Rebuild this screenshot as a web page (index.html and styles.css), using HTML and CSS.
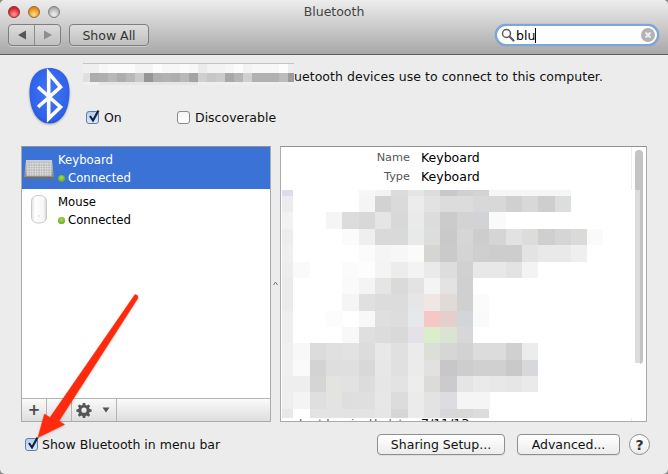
FILE: index.html
```html
<!DOCTYPE html>
<html lang="en">
<head>
<meta charset="utf-8">
<title>Bluetooth</title>
<link rel="stylesheet" href="styles.css">
</head>
<body>
<div class="window">
  <header class="titlebar">
    <div class="title-row">
      <div class="lights"><span class="light red"></span><span class="light amber"></span><span class="light grey"></span></div>
      <div class="title">Bluetooth</div>
    </div>
    <div class="tool-row">
      <div class="segmented">
        <button class="seg"><svg width="10" height="10" viewBox="0 0 10 10"><path class="tri-dark" d="M1 5 9 .5v9z"/></svg></button>
        <button class="seg"><svg width="10" height="10" viewBox="0 0 10 10"><path class="tri-light" d="M9 5 1 .5v9z"/></svg></button>
      </div>
      <button class="tool-btn">Show All</button>
      <div class="search">
        <svg class="glass" width="14" height="14" viewBox="0 0 14 14"><circle cx="5.5" cy="5.5" r="4" class="glass-ring"/><path class="glass-handle" d="m8.5 8.5 4 4"/></svg>
        <span class="search-text">blu</span><span class="caret"></span>
        <svg class="clear" width="14" height="14" viewBox="0 0 14 14"><circle cx="7" cy="7" r="7" class="clear-bg"/><path class="clear-x" d="m4.5 4.5 5 5m0-5-5 5"/></svg>
      </div>
    </div>
  </header>

  <main class="content">
    <section class="top">
      <svg class="bt-icon" width="41" height="57" viewBox="0 0 41 57">
        <defs>
          <radialGradient id="bt" cx="50%" cy="45%" r="60%"><stop offset="0" stop-color="#4478f2"/><stop offset=".8" stop-color="#2f62ea"/><stop offset="1" stop-color="#1c48cc"/></radialGradient>
        </defs>
        <path fill="url(#bt)" d="M20.5 0C33 0 40.500 9 40.500 24 40.500 43 32 55.500 20.500 55.500 9 55.500 .5 43 .5 24 .5 9 8 0 20.500 0Z"/>
        <path class="rune" d="M9 19 31.500 39 19.700 50.500V5L31.500 19 9 39"/>
      </svg>
      <div class="top-right">
        <div class="desc">
          <svg class="desc-blur" width="211" height="22" viewBox="0 0 211 22" shape-rendering="crispEdges">
            <rect width="211" height="1" fill="#c4c4c4"/>
            <rect y="1" width="211" height="9" fill="#f7f7f7"/>
            <rect y="1" width="16" height="9" fill="#efefef"/>
            <rect x="25" y="1" width="27" height="9" fill="#fbfbfb"/>
            <rect x="52" y="1" width="18" height="9" fill="#f4f4f4"/>
            <rect x="70" y="1" width="9" height="9" fill="#fcfcfc"/>
            <rect x="97" y="1" width="9" height="9" fill="#fbfbfb"/>
            <rect x="115" y="1" width="9" height="9" fill="#ebebeb"/>
            <rect x="124" y="1" width="18" height="9" fill="#f3f3f3"/>
            <rect x="151" y="1" width="9" height="9" fill="#fcfcfc"/>
            <rect x="160" y="1" width="9" height="9" fill="#f3f3f3"/>
            <rect x="196" y="1" width="9" height="9" fill="#fcfcfc"/>
            <rect x="205" y="1" width="6" height="9" fill="#eeeeee"/>
            <rect x="0" y="10" width="7" height="9" fill="#e0e0e0"/>
            <rect x="7" y="10" width="9" height="9" fill="#acacac"/>
            <rect x="16" y="10" width="9" height="9" fill="#afafaf"/>
            <rect x="25" y="10" width="9" height="9" fill="#b7b9b7"/>
            <rect x="34" y="10" width="9" height="9" fill="#aeacac"/>
            <rect x="43" y="10" width="9" height="9" fill="#b7b9b7"/>
            <rect x="52" y="10" width="9" height="9" fill="#c9c9c9"/>
            <rect x="61" y="10" width="9" height="9" fill="#979593"/>
            <rect x="70" y="10" width="9" height="9" fill="#aeaeae"/>
            <rect x="79" y="10" width="9" height="9" fill="#b2b2b4"/>
            <rect x="88" y="10" width="9" height="9" fill="#aeaeae"/>
            <rect x="97" y="10" width="9" height="9" fill="#b7b9b7"/>
            <rect x="106" y="10" width="9" height="9" fill="#a5a3a3"/>
            <rect x="115" y="10" width="9" height="9" fill="#cfcfcf"/>
            <rect x="124" y="10" width="9" height="9" fill="#c7c7c5"/>
            <rect x="133" y="10" width="9" height="9" fill="#cbcbcb"/>
            <rect x="142" y="10" width="9" height="9" fill="#a9a7a7"/>
            <rect x="151" y="10" width="9" height="9" fill="#b5b5b7"/>
            <rect x="160" y="10" width="9" height="9" fill="#d0d0d0"/>
            <rect x="169" y="10" width="9" height="9" fill="#b1b1af"/>
            <rect x="178" y="10" width="18" height="9" fill="#b1b1b1"/>
            <rect x="196" y="10" width="9" height="9" fill="#bcbcbc"/>
            <rect x="205" y="10" width="6" height="9" fill="#9c9c9c"/>
            <rect x="0" y="19" width="16" height="3" fill="#f0f0f0"/>
            <rect x="16" y="19" width="99" height="3" fill="#e6e6e6"/>
            <rect x="115" y="19" width="96" height="3" fill="#efefef"/>
          </svg><span class="desc-text">uetooth devices use to connect to this computer.</span>
        </div>
        <div class="toggles">
          <label class="check check-on"><span class="box on"><svg width="16" height="16" viewBox="0 0 16 16"><path class="tick" d="m4 7 3 4.500 5.500-10"/></svg></span>On</label>
          <label class="check"><span class="box"></span>Discoverable</label>
        </div>
      </div>
    </section>

    <section class="panels">
      <div class="list-panel">
        <div class="list">
          <div class="device selected">
            <svg class="device-icon" width="30" height="19" viewBox="0 0 30 19">
              <defs>
                <pattern id="keys" width="2.500" height="2.500" patternUnits="userSpaceOnUse"><rect width="2.500" height="2.500" fill="#a2a2a2"/><rect x=".4" y=".4" width="1.800" height="1.800" fill="#f2f2f2"/></pattern>
                <linearGradient id="kb" x1="0" y1="0" x2="0" y2="1"><stop offset="0" stop-color="#cfcfcf"/><stop offset="1" stop-color="#888888"/></linearGradient>
              </defs>
              <path fill="url(#kb)" d="M2 0h26l2 18H0z"/>
              <path class="kb-base" d="M0 17h30v2H0z"/>
              <rect x="2.500" y="2" width="25" height="14" fill="url(#keys)"/>
            </svg>
            <div class="device-text">
              <div class="device-name">Keyboard</div>
              <div class="device-status"><span class="dot"></span>Connected</div>
            </div>
          </div>
          <div class="device">
            <svg class="device-icon mouse" width="30" height="29" viewBox="0 0 30 29">
              <defs><linearGradient id="ms" x1="0" y1="0" x2="1" y2="0"><stop offset="0" stop-color="#e2e2e2"/><stop offset=".25" stop-color="#fff"/><stop offset=".8" stop-color="#f6f6f6"/><stop offset="1" stop-color="#d4d4d4"/></linearGradient></defs>
              <path class="mouse-body" fill="url(#ms)" d="M7.500 7C7.500 2.500 10 .5 15 .5S22.500 2.500 22.500 7V22C22.500 26 20 28 15 28S7.500 26 7.500 22Z"/>
              <circle class="mouse-mark" cx="15" cy="21" r="1"/>
            </svg>
            <div class="device-text">
              <div class="device-name">Mouse</div>
              <div class="device-status"><span class="dot"></span>Connected</div>
            </div>
          </div>
        </div>
        <div class="list-tools">
          <span class="lt plus">+</span>
          <span class="lt minus"></span>
          <span class="lt gear">
            <svg width="16" height="16" viewBox="0 0 16 16"><path class="cog" d="M6.800 1h2.400l.3 2 1.300.6 1.700-1.200 1.700 1.700-1.200 1.700.6 1.300 2 .3v2.400l-2 .3-.6 1.300 1.200 1.700-1.700 1.700-1.700-1.200-1.300.6-.3 2H6.800l-.3-2-1.300-.6-1.700 1.200-1.700-1.700 1.200-1.700-.6-1.300-2-.3V7.400l2-.3.6-1.300-1.200-1.700 1.700-1.700 1.700 1.200 1.300-.6zM8 5.600a2.600 2.600 0 1 0 0 5.200 2.600 2.600 0 0 0 0-5.200z"/></svg>
            <svg width="8" height="6" viewBox="0 0 8 6"><path class="cog" d="M.5.500h7L4 5.500z"/></svg>
          </span>
          <span class="lt-rest"></span>
        </div>
      </div>
      <div class="splitter"><svg width="5" height="5" viewBox="0 0 5 5"><path class="grip" d="M.5 4 2.500 1 4.500 4"/></svg></div>
      <div class="detail-panel">
        <div class="details">
          <div class="detail-row"><span class="detail-label">Name</span><span class="detail-value">Keyboard</span></div>
          <div class="detail-row"><span class="detail-label">Type</span><span class="detail-value">Keyboard</span></div>
          <div class="detail-row last-row"><span class="detail-label">Last Inquiry Update</span><span class="detail-value">7/11/13</span></div>
        </div>
        <div class="scrollbar"><div class="thumb"></div></div>
        <svg class="mosaic" width="358" height="228" viewBox="282 190 358 228" shape-rendering="crispEdges">
          <rect x="282" y="190" width="358" height="228" fill="#fff"/>
          <rect x="635" y="190" width="5" height="173" fill="#dcdcdc"/>
          <g><rect x="282" y="190" width="11" height="6" fill="#d8deec"/><rect x="358.700" y="190" width="17" height="6" fill="#f7f7f7"/><rect x="375" y="190" width="17" height="6" fill="#f3f3f3"/><rect x="391.300" y="190" width="17" height="6" fill="#dcdcdc"/><rect x="407.700" y="190" width="17" height="6" fill="#e4e5e5"/><rect x="424" y="190" width="17" height="6" fill="#dcdcdc"/><rect x="440.300" y="190" width="17" height="6" fill="#c9c9c9"/><rect x="456.700" y="190" width="17" height="6" fill="#d0d0d0"/><rect x="473" y="190" width="17" height="6" fill="#d3d3d3"/><rect x="489.300" y="190" width="82" height="6" fill="#f6f6f6"/></g>
          <g><rect x="282" y="196" width="11" height="16" fill="#ececf0"/><rect x="358.700" y="196" width="17" height="16" fill="#f5f5f5"/><rect x="375" y="196" width="17" height="16" fill="#d2d2d2"/><rect x="391.300" y="196" width="17" height="16" fill="#dadada"/><rect x="407.700" y="196" width="17" height="16" fill="#ececec"/><rect x="424" y="196" width="17" height="16" fill="#e2e2e2"/><rect x="440.300" y="196" width="17" height="16" fill="#dcdcdc"/><rect x="456.700" y="196" width="17" height="16" fill="#dcdcdc"/><rect x="473" y="196" width="17" height="16" fill="#d8d8d8"/><rect x="489.300" y="196" width="17" height="16" fill="#d8d8d8"/><rect x="505.700" y="196" width="17" height="16" fill="#d0d0d0"/><rect x="522" y="196" width="17" height="16" fill="#d8d8d8"/><rect x="538.300" y="196" width="17" height="16" fill="#cecece"/><rect x="554.700" y="196" width="16.300" height="16" fill="#dcdedd"/></g>
          <g><rect x="282" y="212" width="11" height="17" fill="#f2f2ef"/><rect x="326" y="212" width="17" height="17" fill="#f5f5f5"/><rect x="342.300" y="212" width="17" height="17" fill="#dcdcdc"/><rect x="358.700" y="212" width="17" height="17" fill="#d8d8d8"/><rect x="375" y="212" width="17" height="17" fill="#e5e5e5"/><rect x="391.300" y="212" width="17" height="17" fill="#d8d8d8"/><rect x="407.700" y="212" width="17" height="17" fill="#e9ebeb"/><rect x="424" y="212" width="17" height="17" fill="#dcdcdc"/><rect x="440.300" y="212" width="17" height="17" fill="#cbcbcb"/><rect x="456.700" y="212" width="17" height="17" fill="#d3d3d3"/><rect x="473" y="212" width="17" height="17" fill="#d2d3d6"/><rect x="489.300" y="212" width="16.400" height="17" fill="#fafafa"/></g>
          <g><rect x="282" y="229" width="11" height="16" fill="#ededed"/><rect x="342.300" y="229" width="17" height="16" fill="#fbfbfb"/><rect x="358.700" y="229" width="17" height="16" fill="#efefed"/><rect x="375" y="229" width="17" height="16" fill="#d9d9d9"/><rect x="391.300" y="229" width="17" height="16" fill="#d9d9d9"/><rect x="407.700" y="229" width="17" height="16" fill="#e8eaea"/><rect x="424" y="229" width="17" height="16" fill="#dddddb"/><rect x="440.300" y="229" width="17" height="16" fill="#c9c9c9"/><rect x="456.700" y="229" width="17" height="16" fill="#d6d6d6"/><rect x="473" y="229" width="17" height="16" fill="#cdcdcd"/><rect x="489.300" y="229" width="17" height="16" fill="#d5d5d5"/><rect x="505.700" y="229" width="17" height="16" fill="#e2e2e2"/><rect x="522" y="229" width="17" height="16" fill="#dcdcda"/><rect x="538.300" y="229" width="17" height="16" fill="#cfcfcf"/><rect x="554.700" y="229" width="17" height="16" fill="#d5d5d5"/><rect x="571" y="229" width="17" height="16" fill="#dadad8"/><rect x="587.300" y="229" width="16" height="16" fill="#fafafa"/></g>
          <g><rect x="282" y="245" width="11" height="17" fill="#efefef"/><rect x="358.700" y="245" width="17" height="17" fill="#fbfbfb"/><rect x="375" y="245" width="17" height="17" fill="#f5f5f5"/><rect x="391.300" y="245" width="17" height="17" fill="#f7f7f7"/><rect x="407.700" y="245" width="17" height="17" fill="#fbfbf9"/><rect x="424" y="245" width="17" height="17" fill="#d6d5d2"/><rect x="440.300" y="245" width="17" height="17" fill="#cacaca"/><rect x="456.700" y="245" width="17" height="17" fill="#d4d4d4"/><rect x="473" y="245" width="17" height="17" fill="#cfcfcf"/><rect x="489.300" y="245" width="17" height="17" fill="#cdcdcd"/><rect x="505.700" y="245" width="17" height="17" fill="#cdcdcd"/><rect x="522" y="245" width="17" height="17" fill="#e3e3e3"/><rect x="538.300" y="245" width="17" height="17" fill="#e9e9e9"/><rect x="554.700" y="245" width="17" height="17" fill="#e9e9e9"/><rect x="571" y="245" width="16.300" height="17" fill="#efefef"/></g>
          <g><rect x="282" y="262" width="11" height="16" fill="#ededed"/><rect x="293" y="262" width="17" height="16" fill="#fafafa"/><rect x="342.300" y="262" width="17" height="16" fill="#fbfbfb"/><rect x="358.700" y="262" width="17" height="16" fill="#fdfdfd"/><rect x="375" y="262" width="17" height="16" fill="#f4f4f4"/><rect x="391.300" y="262" width="17" height="16" fill="#ececec"/><rect x="407.700" y="262" width="17" height="16" fill="#f3f3f3"/><rect x="424" y="262" width="17" height="16" fill="#eaeaea"/><rect x="440.300" y="262" width="17" height="16" fill="#dddddd"/><rect x="456.700" y="262" width="17" height="16" fill="#d1d1d1"/><rect x="473" y="262" width="17" height="16" fill="#e8e8e8"/><rect x="489.300" y="262" width="17" height="16" fill="#e8e8e8"/><rect x="505.700" y="262" width="17" height="16" fill="#e3e3e3"/><rect x="522" y="262" width="16.300" height="16" fill="#f3f3f3"/></g>
          <g><rect x="282" y="278" width="11" height="16" fill="#ebebeb"/><rect x="342.300" y="278" width="17" height="16" fill="#fafafa"/><rect x="358.700" y="278" width="17" height="16" fill="#f4f4f4"/><rect x="375" y="278" width="17" height="16" fill="#e5e5e3"/><rect x="391.300" y="278" width="17" height="16" fill="#dadad8"/><rect x="407.700" y="278" width="17" height="16" fill="#e3e3e3"/><rect x="424" y="278" width="17" height="16" fill="#f3f5f4"/><rect x="440.300" y="278" width="17" height="16" fill="#e3e3e3"/><rect x="456.700" y="278" width="16.300" height="16" fill="#d0d0d0"/></g>
          <g><rect x="282" y="294" width="11" height="17" fill="#ebebeb"/><rect x="342.300" y="294" width="17" height="17" fill="#f5f5f5"/><rect x="358.700" y="294" width="17" height="17" fill="#e0e0e0"/><rect x="375" y="294" width="17" height="17" fill="#dcdcdc"/><rect x="391.300" y="294" width="17" height="17" fill="#dcdcdc"/><rect x="407.700" y="294" width="17" height="17" fill="#e6e6e6"/><rect x="424" y="294" width="17" height="17" fill="#f0e6e3"/><rect x="440.300" y="294" width="17" height="17" fill="#e0dbd7"/><rect x="456.700" y="294" width="17" height="17" fill="#d0d0d0"/><rect x="473" y="294" width="16.300" height="17" fill="#fbfbfb"/></g>
          <g><rect x="282" y="311" width="11" height="16" fill="#eeeeee"/><rect x="326" y="311" width="17" height="16" fill="#fcfcfc"/><rect x="358.700" y="311" width="17" height="16" fill="#f8f8f8"/><rect x="375" y="311" width="17" height="16" fill="#dfdfdf"/><rect x="391.300" y="311" width="17" height="16" fill="#dddddd"/><rect x="407.700" y="311" width="17" height="16" fill="#e6e9eb"/><rect x="424" y="311" width="17" height="16" fill="#f5c8c5"/><rect x="440.300" y="311" width="17" height="16" fill="#e4cfcd"/><rect x="456.700" y="311" width="17" height="16" fill="#d2d6d8"/><rect x="473" y="311" width="16.300" height="16" fill="#fafafa"/></g>
          <g><rect x="282" y="327" width="11" height="16" fill="#eeeeee"/><rect x="342.300" y="327" width="17" height="16" fill="#f8f8f8"/><rect x="358.700" y="327" width="17" height="16" fill="#dfdfdf"/><rect x="375" y="327" width="17" height="16" fill="#dcdcdc"/><rect x="391.300" y="327" width="17" height="16" fill="#d9d9d9"/><rect x="407.700" y="327" width="17" height="16" fill="#e4e2e8"/><rect x="424" y="327" width="17" height="16" fill="#dcedcc"/><rect x="440.300" y="327" width="17" height="16" fill="#dbe3d2"/><rect x="456.700" y="327" width="16.300" height="16" fill="#d7d7da"/></g>
          <g><rect x="282" y="343" width="11" height="17" fill="#f0f0f0"/><rect x="293" y="343" width="17" height="17" fill="#f8f8f8"/><rect x="309.700" y="343" width="17" height="17" fill="#dcdcda"/><rect x="326" y="343" width="17" height="17" fill="#e0e0e0"/><rect x="342.300" y="343" width="17" height="17" fill="#e2e2e2"/><rect x="358.700" y="343" width="17" height="17" fill="#dcdcdc"/><rect x="375" y="343" width="17" height="17" fill="#e8e8e8"/><rect x="391.300" y="343" width="17" height="17" fill="#e0e0e0"/><rect x="407.700" y="343" width="17" height="17" fill="#ebebeb"/><rect x="424" y="343" width="17" height="17" fill="#dcdfd8"/><rect x="440.300" y="343" width="17" height="17" fill="#d6d6d6"/><rect x="456.700" y="343" width="17" height="17" fill="#d2d2d2"/><rect x="473" y="343" width="17" height="17" fill="#dcdcdc"/><rect x="489.300" y="343" width="17" height="17" fill="#dcdcdc"/><rect x="505.700" y="343" width="17" height="17" fill="#d0d0d0"/><rect x="522" y="343" width="16.300" height="17" fill="#ebeded"/></g>
          <g><rect x="282" y="360" width="11" height="16" fill="#f0f0f0"/><rect x="293" y="360" width="17" height="16" fill="#fafafa"/><rect x="309.700" y="360" width="17" height="16" fill="#d3d3d3"/><rect x="326" y="360" width="17" height="16" fill="#dedede"/><rect x="342.300" y="360" width="17" height="16" fill="#dfdfdf"/><rect x="358.700" y="360" width="17" height="16" fill="#d8d8d8"/><rect x="375" y="360" width="17" height="16" fill="#e7e7e7"/><rect x="391.300" y="360" width="17" height="16" fill="#e0e0e0"/><rect x="407.700" y="360" width="17" height="16" fill="#ebebeb"/><rect x="424" y="360" width="17" height="16" fill="#e2e0e0"/><rect x="440.300" y="360" width="17" height="16" fill="#c8c6c8"/><rect x="456.700" y="360" width="17" height="16" fill="#cdcdcd"/><rect x="473" y="360" width="17" height="16" fill="#d0d0d0"/><rect x="489.300" y="360" width="17" height="16" fill="#d0d0d0"/><rect x="505.700" y="360" width="17" height="16" fill="#c9c9c9"/><rect x="522" y="360" width="16.300" height="16" fill="#d6d8dc"/></g>
          <g><rect x="282" y="376" width="28" height="16" fill="#eeeeee"/><rect x="309.700" y="376" width="17" height="16" fill="#d5d5d5"/><rect x="326" y="376" width="17" height="16" fill="#e3e4df"/><rect x="342.300" y="376" width="17" height="16" fill="#e2e2e2"/><rect x="358.700" y="376" width="17" height="16" fill="#dcdcdc"/><rect x="375" y="376" width="17" height="16" fill="#e6e6e6"/><rect x="391.300" y="376" width="17" height="16" fill="#e3e3e3"/><rect x="407.700" y="376" width="17" height="16" fill="#ededed"/><rect x="424" y="376" width="17" height="16" fill="#dbdbd8"/><rect x="440.300" y="376" width="17" height="16" fill="#cbcbcd"/><rect x="456.700" y="376" width="17" height="16" fill="#e5e5e5"/><rect x="473" y="376" width="17" height="16" fill="#e9ebeb"/><rect x="489.300" y="376" width="17" height="16" fill="#e8e8e8"/><rect x="505.700" y="376" width="17" height="16" fill="#e6e6e6"/><rect x="522" y="376" width="16.300" height="16" fill="#eaeaea"/></g>
          <g><rect x="282" y="392" width="11" height="17" fill="#efefef"/><rect x="293" y="392" width="17" height="17" fill="#f4f4f4"/><rect x="309.700" y="392" width="17" height="17" fill="#dfdfdf"/><rect x="326" y="392" width="17" height="17" fill="#e2e4e2"/><rect x="342.300" y="392" width="17" height="17" fill="#dedede"/><rect x="358.700" y="392" width="17" height="17" fill="#dfdfdf"/><rect x="375" y="392" width="17" height="17" fill="#e7e7e7"/><rect x="391.300" y="392" width="17" height="17" fill="#dcdcda"/><rect x="407.700" y="392" width="17" height="17" fill="#ebebeb"/><rect x="424" y="392" width="17" height="17" fill="#e3e3e3"/><rect x="440.300" y="392" width="17" height="17" fill="#dcdde0"/><rect x="456.700" y="392" width="33" height="17" fill="#f5f5f5"/></g>
          <g><rect x="282" y="409" width="11" height="9" fill="#e8e8e8"/><rect x="309.700" y="409" width="65.300" height="9" fill="#e3e3e3"/><rect x="375" y="409" width="17" height="9" fill="#e6e6e6"/><rect x="391.300" y="409" width="17" height="9" fill="#d6d6d6"/><rect x="407.700" y="409" width="17" height="9" fill="#ebebeb"/><rect x="424" y="409" width="17" height="9" fill="#e3e3e3"/><rect x="440.300" y="409" width="33" height="9" fill="#d8d8d8"/><rect x="473" y="409" width="16.300" height="9" fill="#dcdcdc"/></g>
        </svg>
      </div>
    </section>

    <footer class="bottom">
      <label class="check"><span class="box on"><svg width="16" height="16" viewBox="0 0 16 16"><path class="tick" d="m4 7 3 4.500 5.500-10"/></svg></span>Show Bluetooth in menu bar</label>
      <div class="actions">
        <button class="btn btn-sharing">Sharing Setup...</button>
        <button class="btn btn-advanced">Advanced...</button>
        <button class="help">?</button>
      </div>
    </footer>
  </main>

  <svg class="arrow" width="130" height="155" viewBox="25 290 130 155">
    <path class="arrow-fill" d="M135 294.500 137.500 295.500 138 298 59 421 64.500 424.500 38 437.500 44.500 414 50 417.500Z"/>
  </svg>
</div>
</body>
</html>
```

FILE: styles.css
```css
* { box-sizing: border-box; }
html { background: #8a8a8a; }
body { margin: 0; }
.window {
  position: relative;
  width: 668px;
  height: 474px;
  display: flex;
  flex-direction: column;
  overflow: hidden;
  background: #ececec;
  border-radius: 5px;
  font-family: "DejaVu Sans", sans-serif;
  font-size: 12.5px;
  color: #111;
}
button { font-family: inherit; }

/* title bar */
.titlebar {
  height: 55px;
  flex: none;
  padding: 0 8px;
  background: linear-gradient(#ededed, #a8a8a8);
  border-bottom: 1px solid #5e5e5e;
}
.title-row { height: 24px; position: relative; display: flex; align-items: center; justify-content: center; }
.title { color: #444; font-size: 12.5px; padding-bottom: 1px; }
.lights { position: absolute; left: 0; top: 6px; display: flex; gap: 8px; }
.light { width: 12px; height: 12px; border-radius: 50%; border: 1px solid #777; }
.red { background: radial-gradient(circle at 50% 75%, #ff9c95, #d8202a 70%); border-color: #8e2a2c; }
.amber { background: radial-gradient(circle at 50% 75%, #ffe08a, #e08a18 70%); border-color: #96682a; }
.grey { background: radial-gradient(circle at 50% 75%, #f2f2f2, #a9a9a9 75%); border-color: #7c7c7c; }
.tool-row { display: flex; align-items: stretch; height: 22px; }
.segmented {
  width: 53px;
  display: flex;
  border: 1px solid #7e7e7e;
  border-radius: 4px;
  background: linear-gradient(#dcdcdc, #c0c0c0);
  box-shadow: 0 1px 0 rgba(255,255,255,.35);
}
.seg { flex: 1; border: 0; padding: 0; background: none; display: flex; align-items: center; justify-content: center; }
.seg + .seg { border-left: 1px solid #8c8c8c; }
.tri-dark { fill: #565656; }
.tri-light { fill: #8e8e8e; }
.tool-btn {
  margin-left: 8px;
  width: 80px;
  padding: 0;
  border: 1px solid #7e7e7e;
  border-radius: 4px;
  background: linear-gradient(#dedede, #bfbfbf);
  box-shadow: 0 1px 0 rgba(255,255,255,.35);
  font-size: 12.5px;
  color: #333;
}
.search {
  margin-left: auto;
  margin-right: 1px;
  width: 164px;
  display: flex;
  align-items: center;
  padding-left: 4px;
  padding-right: 2px;
  background: #fff;
  border: 2px solid #7ea6d6;
  border-radius: 11px;
  box-shadow: 0 0 1px #5f8fc8;
}
.glass { flex: none; }
.glass-ring { fill: none; stroke: #5c5c5c; stroke-width: 1.500; }
.glass-handle { fill: none; stroke: #5c5c5c; stroke-width: 2.200; stroke-linecap: round; }
.search-text { margin-left: 1px; font-size: 12.5px; color: #000; }
.caret { width: 1px; height: 15px; background: #000; }
.clear { margin-left: auto; }
.clear-bg { fill: #b2b2b2; }
.clear-x { stroke: #eee; stroke-width: 2; fill: none; }

/* content */
.content { flex: 1; display: flex; flex-direction: column; padding: 0 21px; min-height: 0; }
.top { height: 91px; flex: none; display: flex; padding: 13px 0 0 8px; }
.bt-icon { flex: none; filter: drop-shadow(0 1px 1px rgba(0,0,0,.3)); }
.rune { fill: none; stroke: #fff; stroke-width: 3.600; stroke-linejoin: miter; }
.top-right { margin-left: 13px; display: flex; flex-direction: column; }
.desc { display: flex; height: 23px; margin-top: -5px; }
.desc-blur { flex: none; }
.desc-text { line-height: 17px; margin-top: 5px; white-space: nowrap; letter-spacing: .04px; }
.toggles { display: flex; margin-top: 23px; margin-left: 3px; }
.check { display: flex; align-items: center; gap: 5px; height: 16px; white-space: nowrap; }
.check-on { width: 91px; }
.box {
  position: relative;
  flex: none;
  width: 13px;
  height: 13px;
  border: 1px solid #8a8a8a;
  border-radius: 3px;
  background: linear-gradient(#f4f4f4, #fff);
}
.box.on { background: linear-gradient(#b5cdec, #dbe9f9); border-color: #5f7ea8; }
.box svg { position: absolute; left: -1px; top: -3px; }
.tick { fill: none; stroke: #13233f; stroke-width: 2.200; }

/* panels */
.panels { display: flex; height: 276px; flex: none; }
.list-panel {
  width: 250px;
  flex: none;
  display: flex;
  flex-direction: column;
  border: 1px solid #ababab;
  border-top-color: #929292;
  background: #fff;
}
.list { flex: 1; }
.device { height: 42px; display: flex; color: #000; }
.device.selected { background: #3a72d6; color: #fff; }
.device-icon { flex: none; margin: 13px 0 0 2px; }
.device-icon.mouse { margin-top: 6px; }
.kb-base { fill: #6f6f6f; }
.mouse-body { stroke: #c9c9c9; stroke-width: 1; }
.mouse-mark { fill: #e4e4e4; }
.device-text { margin-left: 4px; padding-top: 4px; line-height: 18px; font-size: 11.7px; }
.device-status { display: flex; align-items: center; }
.dot {
  width: 7px;
  height: 7px;
  margin: 0 3px 0 0;
  border-radius: 50%;
  background: radial-gradient(circle at 50% 40%, #a8e24e, #4a9412);
}
.list-tools {
  height: 23px;
  flex: none;
  display: flex;
  border-top: 1px solid #b4b4b4;
  background: linear-gradient(#fafafa, #dedede);
}
.lt { width: 25px; border-right: 1px solid #b4b4b4; display: flex; align-items: center; justify-content: center; }
.plus { font-size: 15px; font-weight: bold; color: #4a4a4a; line-height: 1; }
.gear { width: 45px; gap: 10px; justify-content: flex-start; padding-left: 4px; }
.cog { fill: #555; fill-rule: evenodd; }
.lt-rest { flex: 1; }
.splitter { width: 9px; flex: none; display: flex; align-items: center; justify-content: center; padding-bottom: 2px; }
.grip { fill: none; stroke: #7a7a7a; stroke-width: 1; }
.detail-panel {
  position: relative;
  flex: 1;
  display: flex;
  overflow: hidden;
  border: 1px solid #ababab;
  border-top-color: #929292;
  background: #fff;
}
.details { flex: 1; display: flex; flex-direction: column; padding-top: 1px; }
.detail-row { display: flex; height: 19px; align-items: center; gap: 11px; white-space: nowrap; }
.detail-label { width: 129px; text-align: right; color: #565656; font-size: 11.3px; }
.detail-value { color: #000; }
.last-row { margin-top: auto; margin-bottom: -12px; }
.scrollbar { width: 15px; flex: none; border-left: 1px solid #ececec; padding: 3px 3px 0; }
.thumb { width: 8px; height: 214px; border-radius: 4px; background: #c3c3c3; }
.mosaic { position: absolute; left: 1px; top: 43px; }

/* bottom */
.bottom { flex: 1; display: flex; align-items: flex-start; justify-content: space-between; padding: 12px 0 0 4px; }
.bottom .check { height: 20px; gap: 4px; }
.actions { display: flex; margin-right: -3px; }
.btn {
  height: 21px;
  padding: 0;
  background: linear-gradient(#fff, #ececec);
  border: 1px solid #8e8e8e;
  border-radius: 4px;
  box-shadow: 0 1px 0 rgba(0,0,0,.06);
  font-size: 12.5px;
  color: #111;
}
.btn-sharing { width: 128px; }
.btn-advanced { width: 103px; margin-left: 12px; }
.help {
  width: 21px;
  height: 21px;
  margin-left: 9px;
  padding: 0;
  border: 1px solid #8e8e8e;
  border-radius: 50%;
  background: linear-gradient(#fff, #ececec);
  font-size: 14px;
  font-weight: bold;
  color: #333;
}

/* annotation */
.arrow { position: absolute; left: 25px; top: 290px; pointer-events: none; }
.arrow-fill { fill: #ff2a0c; stroke: #f0280a; stroke-width: .5; filter: drop-shadow(0 1px 1px rgba(0,0,0,.2)); }
```
